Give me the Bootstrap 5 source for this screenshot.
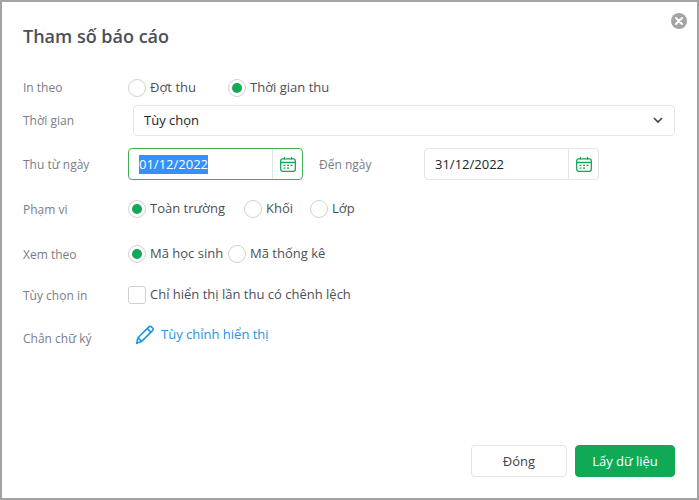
<!DOCTYPE html>
<html lang="vi">
<head>
<meta charset="utf-8">
<title>Tham số báo cáo</title>
<link href="https://cdn.jsdelivr.net/npm/bootstrap@5.3.0/dist/css/bootstrap.min.css" rel="stylesheet">
<style>
html,body{height:100%;margin:0}
body{font-family:"Open Sans","Noto Sans",sans-serif;font-size:13px;color:#212529;background:#fff}
.dlg{width:699px;height:500px;border:2px solid #a3a3a3;position:relative;background:#fff;display:flex;flex-direction:column;padding:0 22px 0 21px}
.dlg-title{font-size:18px;font-weight:600;color:#4b4f57;line-height:24px;margin:22px 0 28px}
.close-x{position:absolute;top:11px;right:10px;width:16px;height:16px}
.frow{display:flex;align-items:center}
.flabel{width:105px;flex:none;color:#7a7d85;font-size:12px}
.r1{height:24px;margin-bottom:5px}
.r2{height:31px;margin-bottom:12px}
.r3{height:32px;margin-bottom:17px}
.r3 .flabel,.r3 .tolabel,.r4 .flabel,.r5 .flabel,.r6 .flabel{padding-top:1px}
.r4{height:24px;margin-bottom:21px}
.r5{height:24px;margin-bottom:17px}
.r6{height:24px;margin-bottom:18px}
.r7{height:24px}
.opt{display:flex;align-items:center;color:#4b4f57;font-size:13px}
.w100{width:100px}.w116{width:116px}.w66{width:66px}
.dot{width:18px;height:18px;border:1px solid #cfd1d4;border-radius:50%;background:#fff;flex:none;margin-right:4px;display:flex;align-items:center;justify-content:center}
.dot.on::after{content:"";width:10px;height:10px;border-radius:50%;background:#10a956}
.tick{width:18px;height:18px;border:1px solid #cfd1d4;border-radius:3px;flex:none;margin-right:4px}
.selbox{width:543px;height:31px;margin-left:5px;border:1px solid #e4e5e7;border-radius:4px;display:flex;align-items:center;justify-content:space-between;padding:0 11px 0 10px;font-size:13px;color:#212529}
.datebox{width:175px;height:32px;border:1px solid #e4e5e7;border-radius:4px;display:flex;align-items:stretch;background:#fff}
.datebox.act{border-color:#3fae55}
.dateval{flex:1;display:flex;align-items:center;padding:1px 0 0 10px;font-size:13px;color:#212529}
.datebox.act .dateval span{background:#3390ff;color:#fff}
.calbtn{width:30px;flex:none;border-left:1px solid #e4e5e7;display:flex;align-items:center;justify-content:center}
.tolabel{width:105px;flex:none;margin-left:16px;color:#7a7d85;font-size:12px}
.lnk{color:#2196e3;font-size:13px;display:flex;align-items:center;gap:6px;margin-left:7px;margin-top:-4px}
.lblow{margin-top:4px}
.actions{margin-top:auto;margin-bottom:21px;display:flex;justify-content:flex-end;gap:8px}
.btn-x{width:96px;height:32px;border-radius:4px;font-size:13px;padding:0;line-height:30px}
.btn-x.w{background:#fff;border:1px solid #e4e5e7;color:#3f434c}
.btn-x.g{width:100px;background:#10a956;border:1px solid #10a956;color:#fff}
</style>
</head>
<body>
<div class="dlg">
  <svg class="close-x" viewBox="0 0 17 17"><circle cx="8.500" cy="8.500" r="8.500" fill="#a4a4a4"/><path d="M5.300 5.300l6.400 6.400M11.700 5.300l-6.400 6.400" stroke="#fff" stroke-width="2.200" stroke-linecap="round"/></svg>
  <div class="dlg-title">Tham số báo cáo</div>

  <div class="frow r1">
    <div class="flabel">In theo</div>
    <div class="opt w100"><span class="dot"></span>Đợt thu</div>
    <div class="opt"><span class="dot on"></span>Thời gian thu</div>
  </div>
  <div class="frow r2">
    <div class="flabel">Thời gian</div>
    <div class="selbox"><span>Tùy chọn</span>
      <svg width="10" height="7" viewBox="0 0 10 7"><path d="M1 1l4 4 4-4" fill="none" stroke="#3f434c" stroke-width="1.600"/></svg>
    </div>
  </div>
  <div class="frow r3">
    <div class="flabel">Thu từ ngày</div>
    <div class="datebox act"><div class="dateval"><span>01/12/2022</span></div>
      <div class="calbtn"><svg width="16" height="15" viewBox="0 0 16 15" fill="none" stroke="#10a956" stroke-width="1.300"><rect x=".7" y="1.800" width="14.600" height="12.500" rx="2"/><path d="M1 5.500h14M4.500 0v2.500M11.500 0v2.500"/><path d="M3.500 8.300h2M7 8.300h2M10.500 8.300h2M3.500 11.200h2M7 11.200h2"/></svg></div>
    </div>
    <div class="tolabel">Đến ngày</div>
    <div class="datebox"><div class="dateval"><span>31/12/2022</span></div>
      <div class="calbtn"><svg width="16" height="15" viewBox="0 0 16 15" fill="none" stroke="#10a956" stroke-width="1.300"><rect x=".7" y="1.800" width="14.600" height="12.500" rx="2"/><path d="M1 5.500h14M4.500 0v2.500M11.500 0v2.500"/><path d="M3.500 8.300h2M7 8.300h2M10.500 8.300h2M3.500 11.200h2M7 11.200h2"/></svg></div>
    </div>
  </div>
  <div class="frow r4">
    <div class="flabel">Phạm vi</div>
    <div class="opt w116"><span class="dot on"></span>Toàn trường</div>
    <div class="opt w66"><span class="dot"></span>Khối</div>
    <div class="opt"><span class="dot"></span>Lớp</div>
  </div>
  <div class="frow r5">
    <div class="flabel">Xem theo</div>
    <div class="opt w100"><span class="dot on"></span>Mã học sinh</div>
    <div class="opt"><span class="dot"></span>Mã thống kê</div>
  </div>
  <div class="frow r6">
    <div class="flabel">Tùy chọn in</div>
    <div class="opt"><span class="tick"></span>Chỉ hiển thị lần thu có chênh lệch</div>
  </div>
  <div class="frow r7">
    <div class="flabel lblow">Chân chữ ký</div>
    <div class="lnk"><svg width="20" height="20" viewBox="0 0 18 18" fill="none" stroke="#2196e3" stroke-width="1.500" stroke-linejoin="round"><path d="M1.500 16.500l1.200-5L12.500 1.700a1.600 1.600 0 0 1 2.300 0l1 1a1.600 1.600 0 0 1 0 2.300L6 14.800z"/><path d="M2.700 11.500l3.300 3.300M11 3.200l3.300 3.300"/></svg><span>Tùy chỉnh hiển thị</span></div>
  </div>

  <div class="actions">
    <button type="button" class="btn btn-x w">Đóng</button>
    <button type="button" class="btn btn-x g">Lấy dữ liệu</button>
  </div>
</div>
<script src="https://cdn.jsdelivr.net/npm/bootstrap@5.3.0/dist/js/bootstrap.bundle.min.js"></script>
</body>
</html>
